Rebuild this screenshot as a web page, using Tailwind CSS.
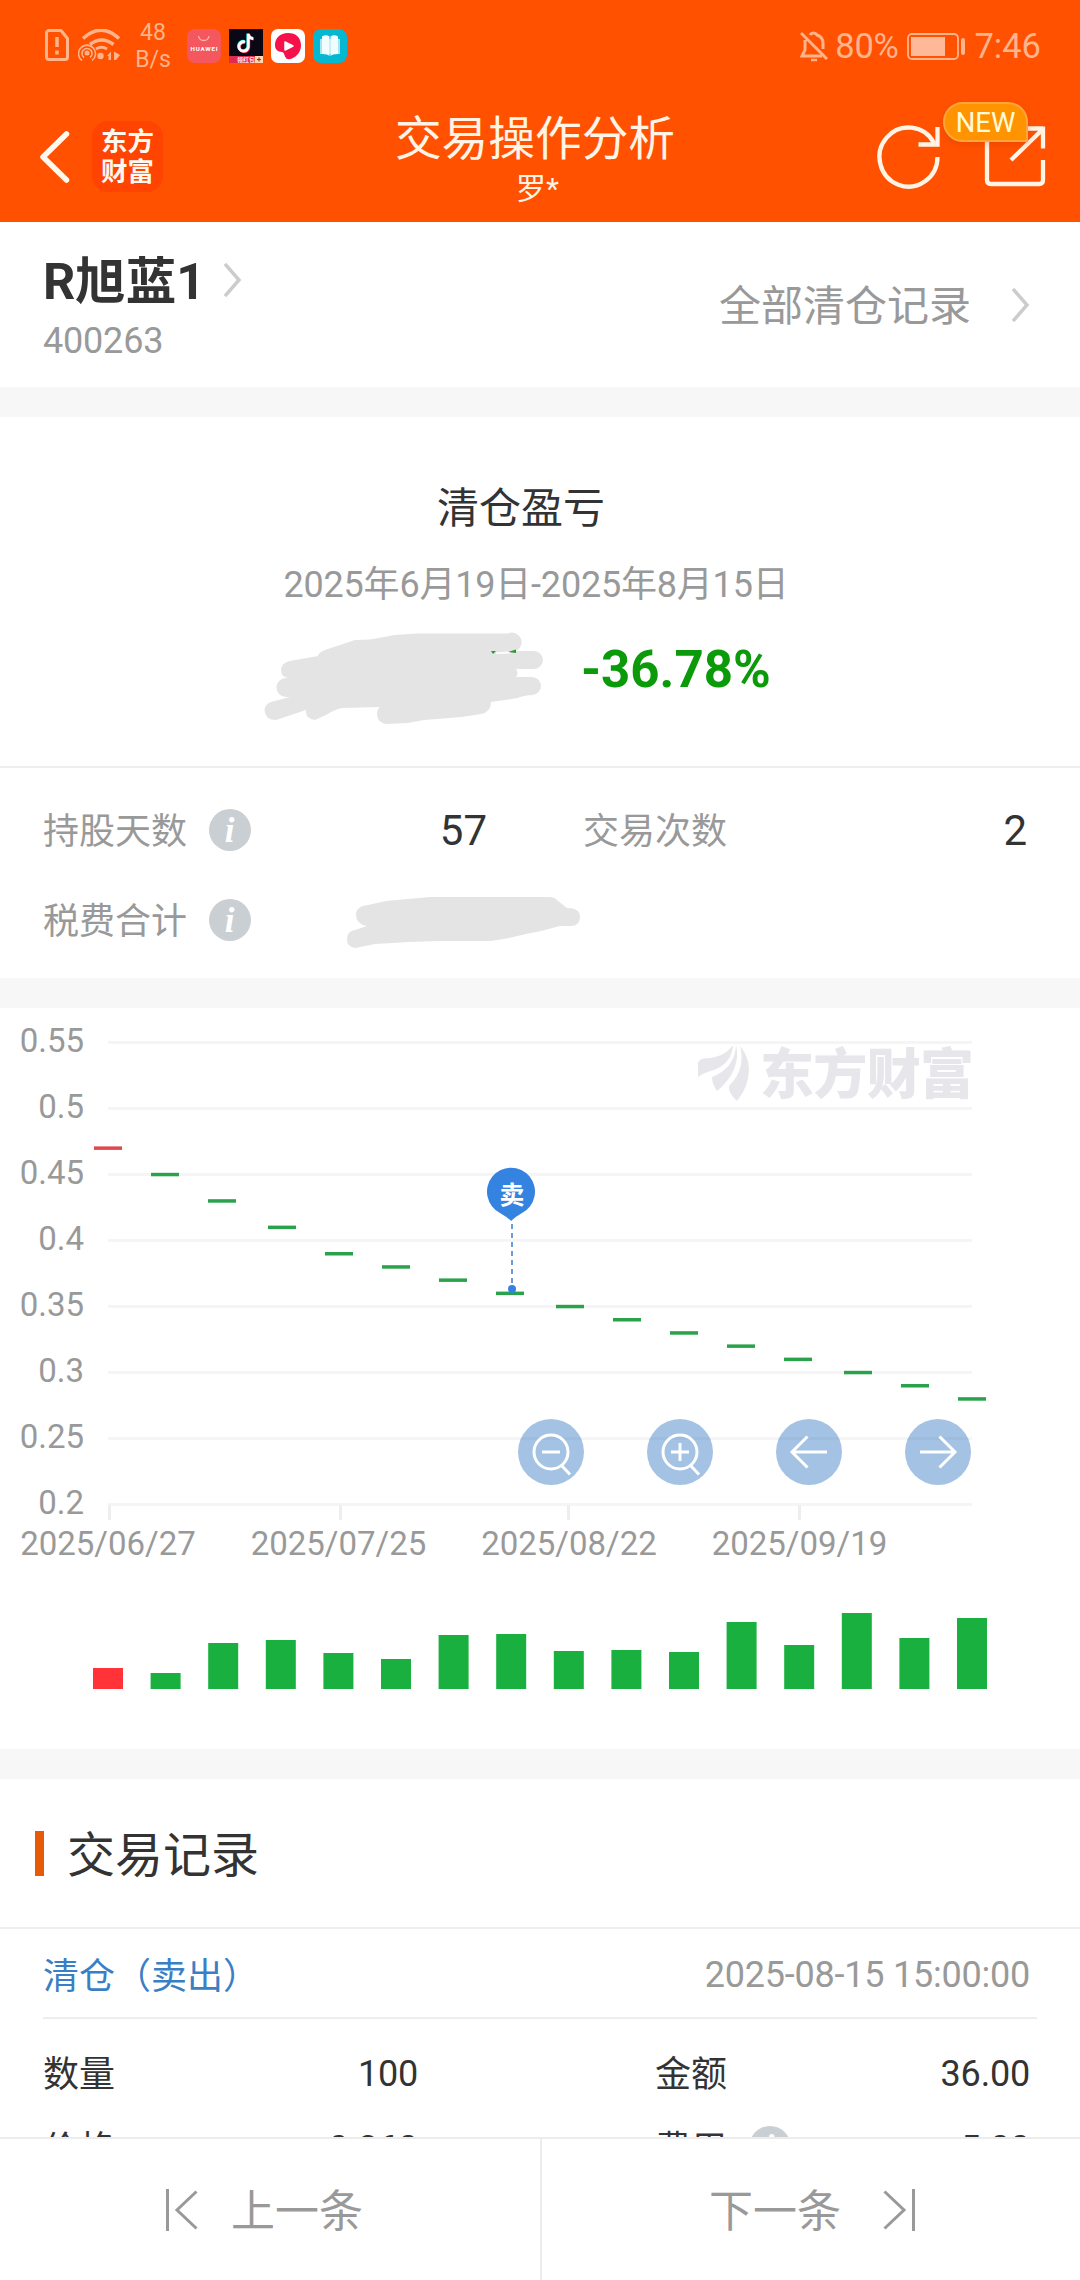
<!DOCTYPE html>
<html lang="zh-CN">
<head>
    <meta charset="UTF-8">
    <meta name="viewport" content="width=device-width, initial-scale=1.0">
    <title>交易操作分析</title>
    <script src="https://cdn.jsdelivr.net/npm/@tailwindcss/browser@4"></script>
</head>
<body class="bg-white font-['Roboto','Noto_Sans_CJK_SC',sans-serif] text-[#333]">
    <div class="relative w-[1080px] h-[2280px] overflow-hidden flex flex-col">
        <header class="h-[222px] shrink-0 bg-[#ff5100] text-[#fff4e6]">
            <!-- status bar -->
            <div class="h-[92px] pl-[45px] pr-[39px] flex items-center text-[#ffb48c]">
                <svg class="w-6 h-8 -mt-[3px]" viewBox="0 0 24 32" fill="none" stroke="currentColor" stroke-width="3">
                    <path d="M4 1.500h12l6.500 8V28a2.500 2.500 0 0 1-2.500 2.500H4A2.500 2.500 0 0 1 1.500 28V4A2.500 2.500 0 0 1 4 1.500z" stroke-linejoin="round"/>
                    <path d="M12 8v10M12 21.500v4" stroke-width="3.500"/>
                </svg>
                <svg class="w-[42px] h-8 ml-[9px] -mt-[3px]" viewBox="0 0 42 32" fill="none" stroke="currentColor">
                    <path d="M5 9.500Q23-7 41 9.500" stroke-width="3.500"/>
                    <path d="M12 15.500q11.500-9 23.500 0" stroke-width="3.500"/>
                    <path d="M18 20q5.500-3.500 11 0" stroke-width="3"/>
                    <circle cx="9" cy="24" r="2.500" fill="currentColor" stroke="none"/>
                    <path d="M6 28.500a5 5 0 1 1 6 0M4 31.500a8.500 8.500 0 1 1 10 0" stroke-width="1.600"/>
                    <circle cx="22.500" cy="27" r="3.200" fill="currentColor" stroke="none"/>
                    <path d="M29 27l4-4.500v8.500h-2.500V27zM36 31v-8.500l6 3.500-4 5z" fill="currentColor" stroke="none"/>
                </svg>
                <div class="w-[50px] ml-[8px] text-center text-[23px] leading-[27px]">48<br>B/s</div>
                <div class="flex gap-2 ml-[9px]">
                    <svg class="w-[34px] h-[34px]" viewBox="0 0 34 34">
                        <rect width="34" height="34" rx="8" fill="#f4575d"/>
                        <path d="M11.500 7c1 6 9.500 6 10.500 0" fill="none" stroke="#ffb9a8" stroke-width="1.300"/>
                        <text x="17" y="22.300" text-anchor="middle" font-size="6.200" font-weight="700" fill="#fff" textLength="27">HUAWEI</text>
                    </svg>
                    <svg class="w-[34px] h-[34px]" viewBox="0 0 34 34">
                        <rect width="34" height="34" fill="#0b0816"/>
                        <g fill="none" stroke-width="2.800">
                            <path d="M15.500 12.500a4.700 4.700 0 1 0 3.300 4.700V4.500c.5 3 2.500 4.500 5 4.700" stroke="#25f4ee"/>
                            <path d="M16.500 13.500a4.700 4.700 0 1 0 3.300 4.700V5.500c.5 3 2.500 4.500 5 4.700" stroke="#fe2c55"/>
                            <path d="M16 13a4.700 4.700 0 1 0 3.300 4.700V5c.5 3 2.500 4.500 5 4.700" stroke="#fff"/>
                        </g>
                        <path d="M0 27h34v7H0z" fill="#e02b50"/>
                        <path d="M26 27h8v7h-8z" fill="#ffd9b0"/>
                        <path d="M28 30.500h4M30 28.500v4" stroke="#c3202f" stroke-width="1.200"/>
                        <text x="8" y="33" font-size="6" font-weight="700" fill="#ffe3ea">领红包</text>
                    </svg>
                    <svg class="w-[34px] h-[34px]" viewBox="0 0 34 34">
                        <rect width="34" height="34" rx="7" fill="#fff"/>
                        <path d="M17 4C9 4 4 9 4 16c0 5 3 6.500 7 7 2 .5 2 2 3 4.500 1.500 3.500 4.500 3 7 2 5-2 9-7 9-13C30 8.500 25 4 17 4z" fill="#f5114a"/>
                        <path d="M14 13l8 4-8 4z" fill="#fff" stroke="#fff" stroke-width="1.500" stroke-linejoin="round"/>
                    </svg>
                    <svg class="w-[34px] h-[34px]" viewBox="0 0 34 34">
                        <rect width="34" height="34" rx="8" fill="#04b8d1"/>
                        <path d="M7 10h20v15H7z" fill="#a5e5ee"/>
                        <path d="M9 7.500q4-2.500 7.500 0V27q-1.500-2-7.500-2zM25 7.500q-4-2.500-7.500 0V27q1.500-2 7.500-2z" fill="#f2fdff"/>
                    </svg>
                </div>
                <svg class="w-7 h-8 ml-auto" viewBox="0 0 28 32" fill="none" stroke="currentColor" stroke-width="3">
                    <path d="M5 10v10l-3 6h20M10 5a4 4 0 0 1 7 0c4 1.500 6 4.500 6 8v6M1 3l26 26"/>
                    <path d="M11 30h6" stroke-width="2.500"/>
                </svg>
                <span class="ml-[7px] mt-[1px] text-[34.500px] tracking-[-0.3px]">80%</span>
                <svg class="w-[58px] h-[27px] ml-[9px]" viewBox="0 0 58 27">
                    <rect x="1" y="1" width="50" height="25" rx="4" fill="none" stroke="currentColor" stroke-width="1.800"/>
                    <path d="M4 4h34v19H4z" fill="#ffb898"/>
                    <rect x="54" y="5" width="4" height="17" rx="2" fill="currentColor"/>
                </svg>
                <span class="ml-[9px] mt-[1px] text-[34.500px]">7:46</span>
            </div>
            <!-- title bar -->
            <div class="h-[130px] grid grid-cols-[340px_1fr_340px]">
                <div class="pl-[39px] flex items-start">
                    <svg class="w-8 h-[52px] mt-[39px]" viewBox="0 0 32 52" fill="none" stroke="#fff8ee" stroke-width="5.500" stroke-linecap="round" stroke-linejoin="round"><path d="M27.500 3L4 26l23.500 23"/></svg>
                    <div class="w-[71px] h-[71px] mt-[29px] ml-[21px] rounded-[16px] bg-[#ff4300] flex items-center justify-center text-[26.500px] leading-[30px] font-bold text-[#fff8ee]">
                        <div>东方<br>财富</div>
                    </div>
                </div>
                <div class="text-center">
                    <h1 class="text-[46.700px] leading-[68px] mt-[13px] pr-[10px]">交易操作分析</h1>
                    <p class="text-[30px] leading-[38px] -mt-[3px] pr-[5px]">罗*</p>
                </div>
                <div class="relative">
                    <svg class="w-[200px] h-[130px] ml-[120px]" viewBox="860 92 200 130" fill="none" stroke="#fff4e6" stroke-width="4.300">
                        <path d="M937.500 157A29 29.500 0 1 1 934 143"/>
                        <path d="M937.500 127v17.500H918.500"/>
                        <path d="M1026 128.500h17M987 138v42q0 4 4 4h48q4 0 4-4v-20M1043 126.500v22M1043 129l-32 31"/>
                    </svg>
                    <span class="absolute left-[203px] top-[10px] w-[85px] h-[40px] rounded-[20px] rounded-br-none bg-[#ff9400] border-2 border-[#ffa53a] text-[27.500px] leading-[38px] text-center text-[#fffbd8] shadow-[0_3px_6px_rgba(190,50,0,0.25)]">NEW</span>
                </div>
            </div>
        </header>

        <section class="h-[165px] shrink-0 pl-[43px] pr-[50px] flex justify-between">
            <div>
                <div class="mt-[25px] flex items-center h-[70px]">
                    <h2 class="text-[50.500px] font-bold">R旭蓝1</h2>
                    <svg class="w-[18px] h-[34px] ml-[19px] -mt-[5px]" viewBox="0 0 18 34" fill="none" stroke="#ccc" stroke-width="3.500"><path d="M1 1l14 16L1 33"/></svg>
                </div>
                <p class="text-[36px] leading-[48px] tracking-[-0.2px] text-[#999]">400263</p>
            </div>
            <a class="flex items-center h-[169px] text-[42px] text-[#999]">全部清仓记录
                <svg class="w-[18px] h-[34px] ml-[41px] -mt-[3px]" viewBox="0 0 18 34" fill="none" stroke="#ccc" stroke-width="3.500"><path d="M1 1l14 16L1 33"/></svg>
            </a>
        </section>
        <div class="h-[30px] shrink-0 bg-[#f7f7f7]"></div>

        <section class="h-[351px] shrink-0 border-b-2 border-[#eee]">
            <h3 class="mt-[62px] text-center text-[42px] leading-[60px] pr-[38px]">清仓盈亏</h3>
            <p class="mt-[19px] text-center text-[36px] leading-[54px] tracking-[-0.2px] text-[#999] pr-[8px]">2025年6月19日-2025年8月15日</p>
            <div class="mt-[18px] pl-[262px] flex">
                <svg class="w-[290px] h-[96px]" viewBox="262 630 290 96">
                    <path d="M417 633.500H508A9 9 0 0 1 516 651H534A9 9 0 0 1 534 669H516Q519 673 516 677H532A9 9 0 0 1 532 695Q521 696 518 698L491 702Q491 712 481 714L462 717 424 720 408 723 386 724Q377 722 377 714 377 709 380 707L343 708Q335 709 326 715L315 720Q305 719 306 710L276 720Q265 720 264.500 710 265 704 271 702L290 697H286A9 9 0 0 1 286 678H297L290 678Q281 678 281 670 281 663 290 661L318 656Q318 653 325 650L355 640 370 639.500 395 635z" fill="#e4e4e4"/>
                    <path d="M491 651h5l-3 3zM508 652l8-2.500v3.500z" fill="#2e9a2e"/>
                    <path d="M496 652.500l12-1 3 2-15 .5z" fill="#fff"/>
                </svg>
                <strong class="ml-[29px] mt-[13px] text-[51px] leading-[54px] font-bold text-[#0a9a0a]">-36.78%</strong>
            </div>
        </section>

        <section class="h-[210px] shrink-0 pt-[17px] px-[43px] text-[36px]">
            <div class="h-[90px] flex items-center">
                <span class="mt-[3px] text-[#999]">持股天数</span>
                <svg class="w-[42px] h-[42px] ml-[22px]" viewBox="0 0 42 42"><circle cx="21" cy="21" r="21" fill="#cacfd4"/><text x="20.500" y="33" text-anchor="middle" font-family="Liberation Serif" font-style="italic" font-weight="700" font-size="35" fill="#fff">i</text></svg>
                <span class="w-[236px] text-right text-[42px]">57</span>
                <span class="ml-[96px] mt-[3px] text-[#999]">交易次数</span>
                <span class="ml-auto mr-[10px] text-[42px]">2</span>
            </div>
            <div class="h-[90px] flex items-center">
                <span class="mt-[3px] text-[#999]">税费合计</span>
                <svg class="w-[42px] h-[42px] ml-[22px]" viewBox="0 0 42 42"><circle cx="21" cy="21" r="21" fill="#cacfd4"/><text x="20.500" y="33" text-anchor="middle" font-family="Liberation Serif" font-style="italic" font-weight="700" font-size="35" fill="#fff">i</text></svg>
                <svg class="w-[240px] h-[56px] ml-[93px] mt-1" viewBox="344 894 240 56"><path d="M430 897h119q6 0 9 4l9 7q13 0 13 9t-10 9h-10l-19 5-15 3-17 4-18 3h-50l-32 1-34 2-20 4q-8-1-8-9t8-9l12-4q-11-2-11-11t12-10l18-4z" fill="#e4e4e4"/></svg>
            </div>
        </section>
        <div class="h-[30px] shrink-0 bg-[#f7f7f7]"></div>

        <!-- weekly candles and volume -->
        <section class="relative h-[741px] shrink-0">
            <svg class="w-[1080px] h-[741px]" viewBox="0 1008 1080 741">
                <g fill="#e7e6ea">
                    <path d="M698 1077v-14q1-4 6-4.500 20-.5 29-13.500-1 18-19 25-11 3-16 7z"/>
                    <path d="M717 1091q-5-7-5-14 23-9 24-32 3 12-2 24-4 11-17 22z"/>
                    <path d="M740 1046q9 11 9 23 0 17-12 32-9-8-8-15 17-17 11-40z"/>
                    <text x="760" y="1094" font-size="54" font-weight="900" textLength="214">东方财富</text>
                </g>
                <g id="grid" stroke="#f5f5f5" stroke-width="3"></g>
                <g stroke="#eee" stroke-width="3"><path d="M109.500 1505v15M340.500 1505v15M568.500 1505v15M799.500 1505v15"/></g>
                <g id="ylabels" font-size="33" fill="#999" text-anchor="end"></g>
                <g font-size="33" fill="#999" text-anchor="middle">
                    <text x="108" y="1555">2025/06/27</text>
                    <text x="338.500" y="1555">2025/07/25</text>
                    <text x="569" y="1555">2025/08/22</text>
                    <text x="799.500" y="1555">2025/09/19</text>
                </g>
                <g id="candles"></g>
                <g id="volume"></g>
                <path d="M512 1224v62" stroke="#5b93cf" stroke-width="1.800" stroke-dasharray="5 4"/>
                <circle cx="512" cy="1289" r="4" fill="#3583dd"/>
                <path d="M511 1221q-4-4-11-8a24 24 0 1 1 22 0q-7 4-11 8z" fill="#3583e0"/>
                <text x="512" y="1203.500" font-size="25" font-weight="700" fill="#fff" text-anchor="middle">卖</text>
            </svg>
            <div class="absolute left-[518px] top-[411px] flex gap-[63px]">
                <svg class="w-[66px] h-[66px]" viewBox="0 0 66 66" fill="none" stroke="#fff" stroke-width="3"><circle cx="33" cy="33" r="33" fill="#3577c4" fill-opacity=".45" stroke="none"/><circle cx="33" cy="33" r="17"/><path d="M24 33h18M44 47l8 8.500"/></svg>
                <svg class="w-[66px] h-[66px]" viewBox="0 0 66 66" fill="none" stroke="#fff" stroke-width="3"><circle cx="33" cy="33" r="33" fill="#3577c4" fill-opacity=".45" stroke="none"/><circle cx="33" cy="33" r="17"/><path d="M24 33h18M33 24v18M44 47l8 8.500"/></svg>
                <svg class="w-[66px] h-[66px]" viewBox="0 0 66 66" fill="none" stroke="#fff" stroke-width="3"><circle cx="33" cy="33" r="33" fill="#3577c4" fill-opacity=".45" stroke="none"/><path d="M51 33H16M31.500 17.500L16 33l15.500 15.500"/></svg>
                <svg class="w-[66px] h-[66px]" viewBox="0 0 66 66" fill="none" stroke="#fff" stroke-width="3"><circle cx="33" cy="33" r="33" fill="#3577c4" fill-opacity=".45" stroke="none"/><path d="M15 33h35M34.500 17.500L50 33 34.500 48.500"/></svg>
            </div>
        </section>
        <div class="h-[30px] shrink-0 bg-[#f7f7f7]"></div>

        <section class="shrink-0">
            <div class="h-[150px] pl-[35px] flex items-center border-b-2 border-[#eee]">
                <span class="w-[9px] h-[45px] bg-[#e65a0a]"></span>
                <h3 class="ml-[23px] mt-[5px] text-[48px]">交易记录</h3>
            </div>
            <div class="mx-[43px] h-[90px] pt-[4px] pr-[7px] flex items-center justify-between text-[36px] border-b-2 border-[#eee]">
                <span class="text-[#3a7fc6]">清仓<span class="font-['Noto_Sans_CJK_TC',sans-serif]">（</span>卖出<span class="font-['Noto_Sans_CJK_TC',sans-serif]">）</span></span>
                <span class="tracking-[-0.22px] text-[#999]">2025-08-15 15:00:00</span>
            </div>
            <div class="px-[43px] pt-[17px] text-[36px]">
                <div class="h-[75px] flex items-center">
                    <span class="mt-[2px]">数量</span>
                    <span class="w-[303px] text-right tracking-[-0.2px]">100</span>
                    <span class="ml-[237px] mt-[2px]">金额</span>
                    <span class="ml-auto mr-[7px] tracking-[-0.2px]">36.00</span>
                </div>
                <div class="h-[75px] flex items-center">
                    <span class="mt-[2px]">价格</span>
                    <span class="w-[303px] text-right tracking-[-0.2px]">0.360</span>
                    <span class="ml-[237px] mt-[2px]">费用</span>
                    <svg class="w-[42px] h-[42px] ml-[22px] -mt-[3px]" viewBox="0 0 42 42"><circle cx="21" cy="21" r="21" fill="#cacfd4"/><text x="20.500" y="33" text-anchor="middle" font-family="Liberation Serif" font-style="italic" font-weight="700" font-size="35" fill="#fff">i</text></svg>
                    <span class="ml-auto mr-[7px] tracking-[-0.2px]">5.00</span>
                </div>
            </div>
        </section>

        <nav class="absolute inset-x-0 bottom-0 h-[143px] bg-white border-t-2 border-[#ececec] flex text-[44px] text-[#999]">
            <div class="w-[542px] pl-[165px] border-r-2 border-[#ececec] flex items-center">
                <svg class="w-[34px] h-[44px]" viewBox="0 0 34 44" fill="none" stroke="#999" stroke-width="3"><path d="M2.500 1v42M31.500 3.500L12 22l19.500 18.500"/></svg>
                <span class="ml-[32px] mt-[4px]">上一条</span>
            </div>
            <div class="flex-1 pl-[167px] flex items-center">
                <span class="mt-[4px]">下一条</span>
                <svg class="w-[34px] h-[44px] ml-[41px]" viewBox="0 0 34 44" fill="none" stroke="#999" stroke-width="3"><path d="M31.500 1v42M2.500 3.500L22 22 2.500 40.500"/></svg>
            </div>
        </nav>
    </div>
    <script>
        const prices = [0.47, 0.45, 0.43, 0.41, 0.39, 0.38, 0.37, 0.36, 0.35, 0.34, 0.33, 0.32, 0.31, 0.3, 0.29, 0.28];
        const candleX = [94, 151, 208, 268, 325, 382, 439, 496, 556, 613, 670, 727, 784, 844, 901, 958];
        const volumes = [21, 16, 46, 49, 36, 30, 54, 55, 38, 39, 37, 67, 44, 76, 51, 71];
        const yOf = (v) => 1042.5 + (0.55 - v) * 1320;

        let grid = '', labels = '', candles = '', bars = '';
        [0.55, 0.5, 0.45, 0.4, 0.35, 0.3, 0.25, 0.2].forEach((v) => {
            const y = Math.round(yOf(v) - 0.5) + 0.5;
            grid += `<path d="M108 ${y}H972"/>`;
            labels += `<text x="84" y="${y + 9.5}">${v}</text>`;
        });
        prices.forEach((v, i) => {
            const red = i === 0;
            candles += `<rect x="${candleX[i]}" y="${yOf(v) - 1.7}" width="28" height="3.5" fill="${red ? '#e0484c' : '#2aa24c'}"/>`;
            bars += `<rect x="${93 + i * 57.6}" y="${1689 - volumes[i]}" width="30" height="${volumes[i]}" fill="${red ? '#ff3338' : '#1ab040'}"/>`;
        });
        document.getElementById('grid').innerHTML = grid;
        document.getElementById('ylabels').innerHTML = labels;
        document.getElementById('candles').innerHTML = candles;
        document.getElementById('volume').innerHTML = bars;
    </script>
</body>
</html>
